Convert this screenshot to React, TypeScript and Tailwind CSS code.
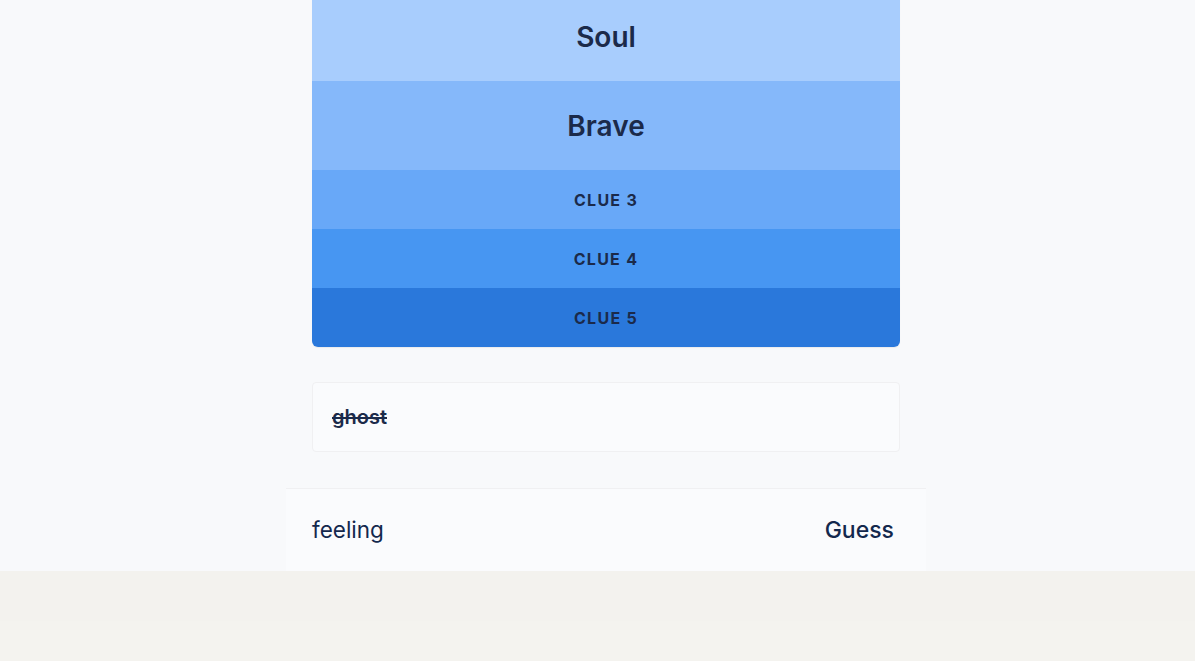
import React from "react";

type Clue = {
  label: string;
  revealed: boolean;
  bg: string;
  height: string;
};

const clues: Clue[] = [
  { label: "Soul", revealed: true, bg: "bg-[#a8cdfd]", height: "h-[89px]" },
  { label: "Brave", revealed: true, bg: "bg-[#85b8fa]", height: "h-[89px]" },
  { label: "Clue 3", revealed: false, bg: "bg-[#68a8f8]", height: "h-[59px]" },
  { label: "Clue 4", revealed: false, bg: "bg-[#4796f2]", height: "h-[59px]" },
  { label: "Clue 5", revealed: false, bg: "bg-[#2a78db]", height: "h-[59px]" },
];

function ClueRow({ clue }: { clue: Clue }) {
  return (
    <div className={`flex items-center justify-center ${clue.bg} ${clue.height}`}>
      {clue.revealed ? (
        <span className="text-[28px] font-semibold text-[#1b2a4a]">{clue.label}</span>
      ) : (
        <span className="text-[16px] font-bold uppercase tracking-[0.08em] text-[#1b2a4a]">
          {clue.label}
        </span>
      )}
    </div>
  );
}

export default function App() {
  return (
    <div
      className="min-h-[661px] flex flex-col bg-[#f3f2ee] overflow-hidden"
      style={{ fontFamily: "Inter, 'Noto Sans', sans-serif" }}
    >
      <div className="bg-[#f8f9fb] flex flex-col items-center h-[571px] pl-[17px]">
        <div className="w-[588px] -mt-2 rounded-b-md overflow-hidden shadow-[0_1px_1px_rgba(0,0,0,0.06)]">
          {clues.map((c) => (
            <ClueRow key={c.label} clue={c} />
          ))}
        </div>

        <div className="w-[588px] mt-[35px] h-[70px] flex items-center px-[19px] bg-[#fafbfd] border border-[#f0f0f2] rounded-sm">
          <span className="text-[20px] font-semibold text-[#1b2a4a] line-through">ghost</span>
        </div>

        <div className="w-[640px] mt-[36px] h-[83px] flex items-center justify-between pl-[26px] pr-[32px] bg-[#fafbfd] border-t border-[#f0f0f2]">
          <span className="text-[22.5px] text-[#13284d]">feeling</span>
          <span className="text-[23px] font-medium text-[#13284d]">Guess</span>
        </div>
      </div>
      <div className="h-[50px] bg-[#f3f2ee]" />
      <div className="flex-1 bg-[#f4f3ef]" />
    </div>
  );
}
